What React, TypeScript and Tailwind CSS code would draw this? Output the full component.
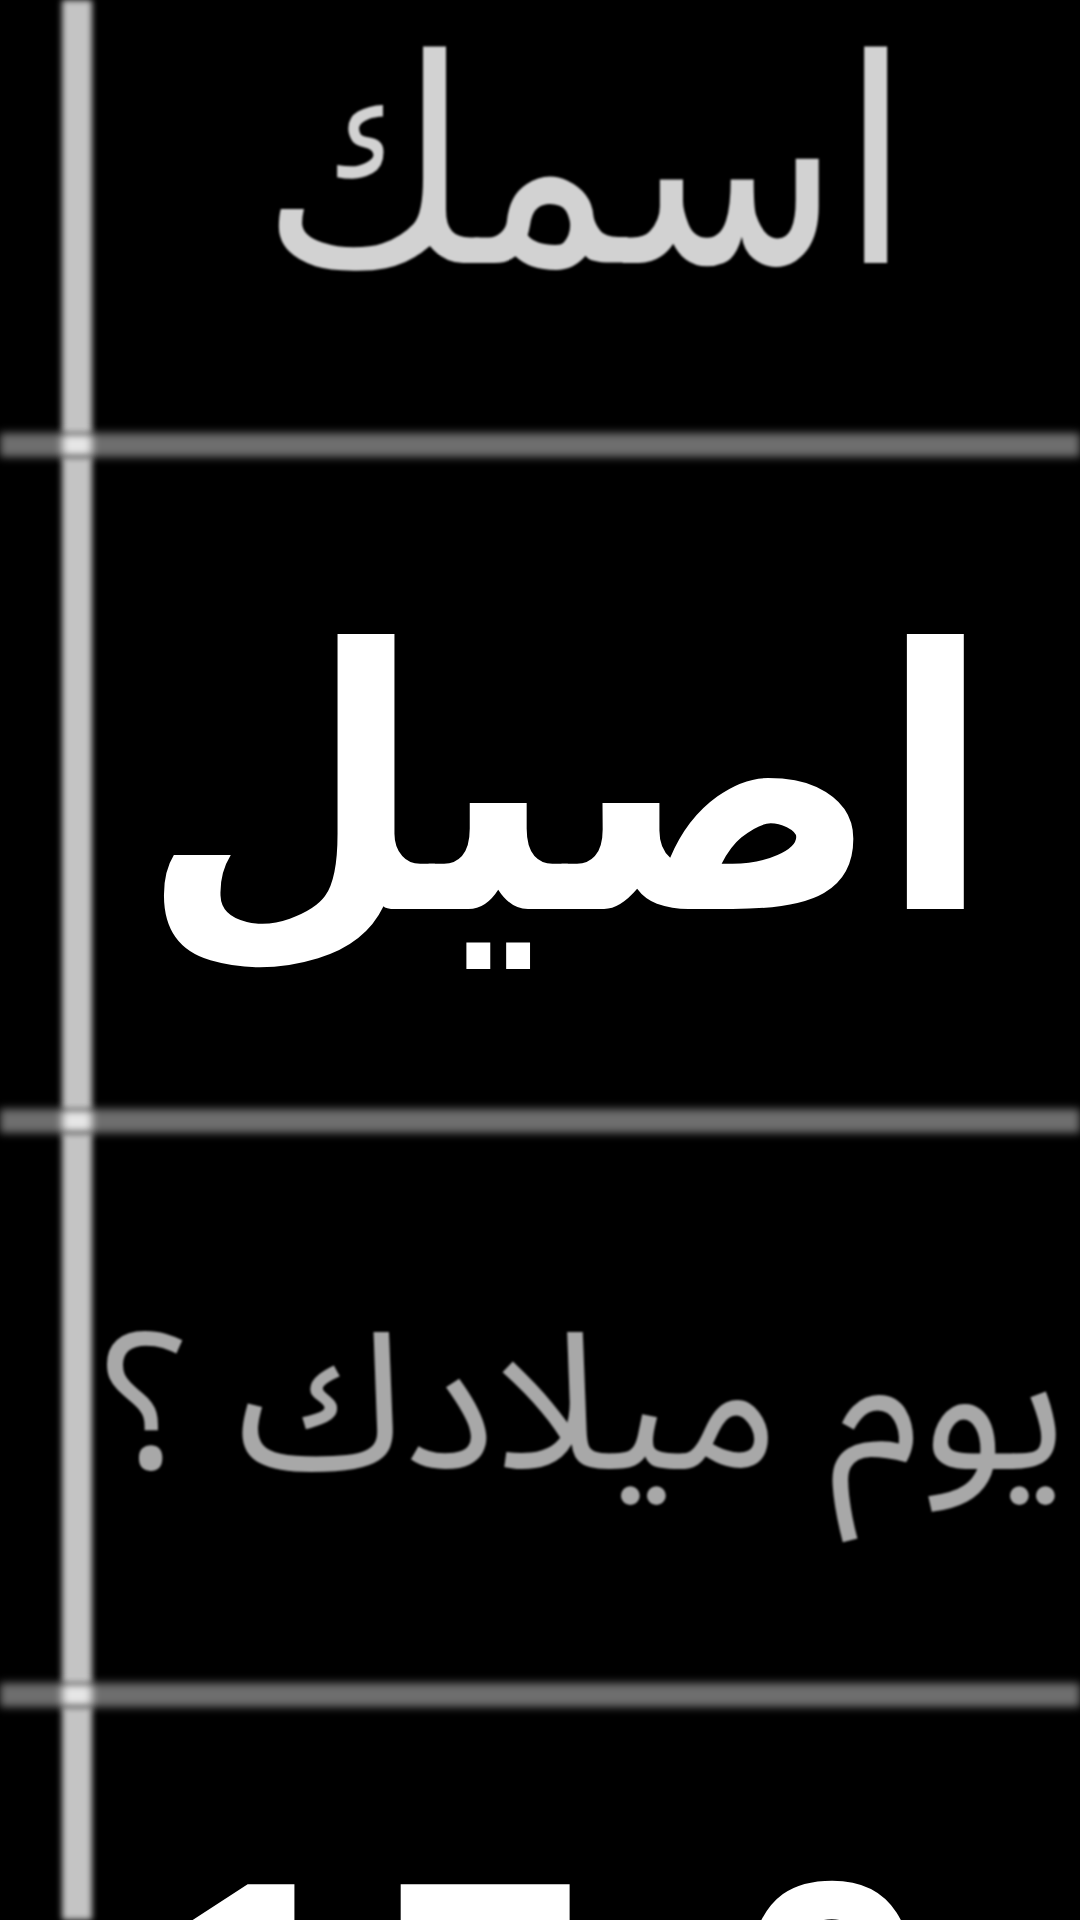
const arabic = { fontFamily: '"Noto Sans Arabic", "DejaVu Sans", sans-serif' };
const arabicNarrow = { fontFamily: '"DejaVu Sans Condensed", "DejaVu Sans", sans-serif' };

function HLine() {
  return (
    <div className="flex h-[24px] w-full blur-[4px]">
      <div className="w-[62px] bg-[#6e6e6e]" />
      <div className="w-[30px] bg-[#e6e6e6]" />
      <div className="flex-1 bg-[#6e6e6e]" />
    </div>
  );
}

function Row({ h, children }: { h: string; children?: React.ReactNode }) {
  return (
    <div className={`flex w-full ${h}`}>
      <div className="w-[62px] shrink-0" />
      <div className="w-[30px] shrink-0 bg-[#c4c4c4] blur-[3px]" />
      <div className="flex-1 min-w-0 overflow-hidden">{children}</div>
    </div>
  );
}

export default function App() {
  return (
    <div className="flex h-[1920px] w-[1080px] flex-col overflow-hidden bg-black">
      <Row h="h-[433px]">
        <div dir="rtl" style={arabicNarrow} className="pt-[22px] text-center text-[285px] leading-none font-medium text-[#d2d2d2] blur-[1px]">
          اسمك
        </div>
      </Row>
      <HLine />
      <Row h="h-[652px]">
        <div dir="rtl" style={arabicNarrow} className="pt-[146px] pr-[40px] text-center text-[362px] leading-none font-bold text-white">
          اصيل
        </div>
      </Row>
      <HLine />
      <Row h="h-[550px]">
        <div dir="rtl" style={arabic} className="pt-[180px] whitespace-nowrap text-center text-[190px] leading-none text-[#a8a8a8] blur-[1px]">
          يوم ميلادك ؟
        </div>
      </Row>
      <HLine />
      <Row h="h-[213px]">
        <div style={{ fontFamily: '"Liberation Sans", Arial, sans-serif' }} className="flex pt-[120px] text-[360px] leading-none font-bold text-white">
          <span className="ml-[69px]">1</span>
          <span className="ml-[24px]">7</span>
          <span className="ml-[146px]">0</span>
        </div>
      </Row>
    </div>
  );
}
